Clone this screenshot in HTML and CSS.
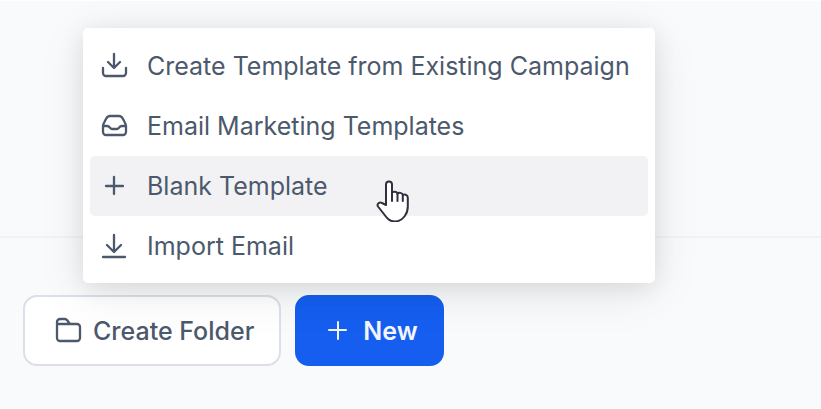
FILE: index.html
```html
<!DOCTYPE html>
<html lang="en">
<head>
  <meta charset="UTF-8">
  <meta name="viewport" content="width=device-width, initial-scale=1.0">
  <title>Templates</title>
  <link rel="stylesheet" href="styles.css">
</head>
<body>
  <main class="content"></main>

  <footer class="toolbar">
    <button type="button" class="button">
      <svg class="icon" viewBox="0 0 28 28">
        <path d="M3 8V5a3 3 0 0 1 3-3h5a3 3 0 0 1 2 1l3 4h7a3 3 0 0 1 3 3v11a3 3 0 0 1-3 3H6a3 3 0 0 1-3-3V8a1 1 0 0 1 1-1h12"/>
      </svg>
      Create Folder
    </button>
    <button type="button" class="button button-primary" aria-haspopup="menu" aria-expanded="true">
      <svg class="icon" viewBox="0 0 28 28">
        <path d="M14 5v17M5 13h17"/>
      </svg>
      New
    </button>

    <div class="menu" role="menu">
      <button type="button" class="menu-item" role="menuitem">
        <svg class="icon" viewBox="0 0 28 28">
          <path d="M13 2v14M7 10l6 6 6-6M2 16v5a3 3 0 0 0 3 3h17a3 3 0 0 0 3-3v-5"/>
        </svg>
        Create Template from Existing Campaign
      </button>
      <button type="button" class="menu-item" role="menuitem">
        <svg class="icon" viewBox="0 0 28 28">
          <path d="M2 14c0-2 2-5 3-7 1-2 2-3 4-3h9c2 0 3 1 4 3 1 2 3 5 3 7v6a3 3 0 0 1-3 3H5a3 3 0 0 1-3-3zM2 14h4c3 0 3 3 5 3h5c2 0 2-3 5-3h4"/>
        </svg>
        Email Marketing Templates
      </button>
      <button type="button" class="menu-item active" role="menuitem">
        <svg class="icon" viewBox="0 0 28 28">
          <path d="M13 5v17M5 14h17"/>
        </svg>
        Blank Template
      </button>
      <button type="button" class="menu-item" role="menuitem">
        <svg class="icon" viewBox="0 0 28 28">
          <path d="M13 3v16M6 13l7 7 7-7M2 25h22"/>
        </svg>
        Import Email
      </button>
      <svg class="pointer" viewBox="0 0 34 42">
        <path d="M10 25V4.500a3 3 0 0 1 6 0V13c0-1.500 5-2 5.500.8 1-1.600 5-1.300 5.300 1.200 1.200-1 5-.6 5 2.500v9c0 4-1 7-3 9.500-2.500 3.500-5 5.500-10 5.500-5.500 0-8-3.500-10.500-7L2 26.500c-1.600-2.600 1.600-5 4-3.500z"/>
        <path d="M16 13v8M21.500 14v7M26.800 15v6"/>
      </svg>
    </div>
  </footer>
</body>
</html>
```

FILE: styles.css
```css
* {
  box-sizing: border-box;
}
body {
  font-family: Inter, 'Liberation Sans', sans-serif;
  background-color: #f9fafc;
  color: #4c596c;
  display: flex;
  flex-direction: column;
  min-height: 100vh;
  margin: 0;
  border-top: 1px solid white;
  border-bottom: 1px solid white;
}
.content {
  flex: 1;
}
.toolbar {
  position: relative;
  display: flex;
  gap: 14px;
  padding: 57px 23px 42px;
  border-top: 2px solid #f1f2f4;
}
.button {
  display: flex;
  align-items: center;
  gap: 11px;
  height: 71px;
  padding: 0 25px 0 29px;
  background-color: white;
  color: #4c596c;
  border: 2px solid #dcdfe7;
  border-radius: 14px;
  font-family: inherit;
  font-size: 25px;
  font-weight: 500;
  line-height: 32px;
  white-space: nowrap;
  cursor: pointer;
}
.button-primary {
  background-color: #155eef;
  color: #f3f6fe;
  border-color: #155eef;
  font-weight: 600;
  padding: 0 24px 0 27px;
}
.icon {
  flex: none;
  width: 28px;
  height: 28px;
  fill: none;
  stroke: currentColor;
  stroke-width: 2.3;
  stroke-linecap: round;
  stroke-linejoin: round;
}
.button-primary .icon {
  stroke-width: 2;
}
.menu {
  position: absolute;
  left: 83px;
  bottom: 125px;
  width: 572px;
  padding: 8px 7px 7px;
  background-color: white;
  border-radius: 5px;
  box-shadow: 0 10px 50px rgba(0, 0, 0, 0.08), 0 4px 24px rgba(0, 0, 0, 0.09);
}
.menu-item {
  display: flex;
  align-items: center;
  gap: 18px;
  width: 100%;
  height: 60px;
  padding: 0 11px;
  background-color: transparent;
  color: #4c596c;
  border: none;
  border-radius: 5px;
  font-family: inherit;
  font-size: 25px;
  line-height: 32px;
  text-align: left;
  white-space: nowrap;
  cursor: pointer;
}
.menu-item.active,
.menu-item:hover {
  background-color: #f2f2f4;
}
.pointer {
  position: absolute;
  left: 293px;
  top: 152px;
  width: 34px;
  height: 42px;
  fill: white;
  stroke: #30303f;
  stroke-width: 2;
  stroke-linecap: round;
  stroke-linejoin: round;
  pointer-events: none;
}
```
